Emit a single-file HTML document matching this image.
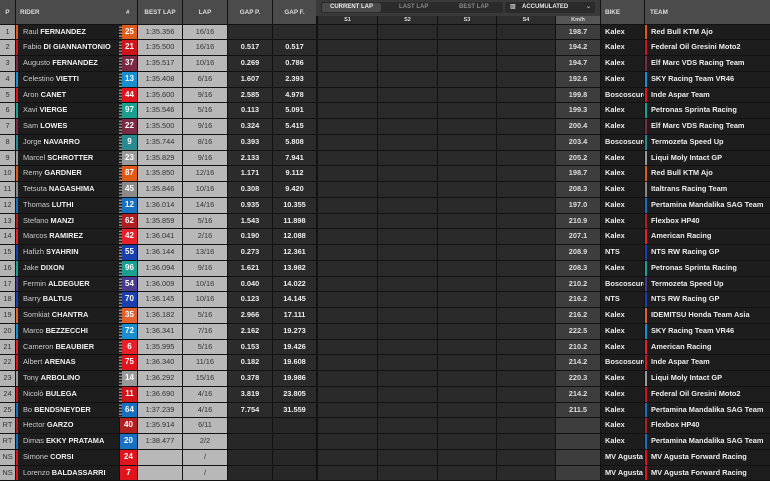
<!DOCTYPE html>
<html><head><meta charset="utf-8"><style>
*{margin:0;padding:0;box-sizing:border-box}
body{width:770px;height:480px;background:#121212;overflow:hidden;font-family:"Liberation Sans",sans-serif;font-size:7.4px;color:#eee;position:relative}
.h{position:absolute;top:0;height:24px;background:#4b4b4b;color:#ddd;font-size:6.3px;font-weight:bold;line-height:25px;text-align:center}
#rows{position:absolute;top:24px;left:0;width:770px}
.r{position:relative;height:15.75px}
.r i{position:absolute;top:0.5px;height:14.75px;line-height:14.75px;font-style:normal;white-space:nowrap;overflow:hidden}
.p{left:0;width:15px;background:#b3b3b3;color:#333;text-align:center}
.rd{left:16px;width:103px;background:#1d1d1d;color:#ccc;padding-left:5px;border-left:2px solid var(--c)}
.rd b{color:#f2f2f2}
.ck{left:119px;width:3px;background:repeating-linear-gradient(#1d1d1d 0 1.5px,#888 1.5px 3px)}
.n{left:122px;width:15px;color:#fff;font-weight:bold;text-align:center;font-size:8px}
.bl{left:138px;width:44px;background:#b8b8b8;color:#333;text-align:center}
.lp{left:183px;width:44px;background:#b8b8b8;color:#333;text-align:center}
.gp{left:228px;width:44px;background:#2b2b2b;color:#eee;font-weight:bold;text-align:center}
.gf{left:273px;width:43px;background:#2b2b2b;color:#eee;font-weight:bold;text-align:center}
.s1{left:318px;width:59px;background:#2a2a2a}
.s2{left:378px;width:59px;background:#2a2a2a}
.s3{left:438px;width:58px;background:#2a2a2a}
.s4{left:497px;width:58px;background:#2a2a2a}
.km{left:556px;width:44px;background:#3d3d3d;color:#ddd;text-align:center;font-weight:bold}
.bk{left:601px;width:43px;background:#1d1d1d;color:#eee;font-weight:bold;padding-left:4px}
.tm{left:645px;width:125px;background:#1d1d1d;color:#eee;font-weight:bold;padding-left:4px;border-left:2px solid var(--c)}
.x .gp,.x .gf{background:#272727}
</style></head><body>
<div class="h" style="left:0;width:15px">P</div>
<div class="h" style="left:16px;width:121px;text-align:left;padding-left:4px">RIDER<span style="position:absolute;left:110px">#</span></div>
<div class="h" style="left:138px;width:44px">BEST LAP</div>
<div class="h" style="left:183px;width:44px">LAP</div>
<div class="h" style="left:228px;width:44px">GAP P.</div>
<div class="h" style="left:273px;width:43px">GAP F.</div>
<div class="h" style="left:316px;width:284px;height:16px;background:#3a3a3a"></div>
<div style="position:absolute;left:321px;top:2px;width:182px;height:11px;background:#2b2b2b;border-radius:2px;font-size:6px;font-weight:bold;line-height:11px;color:#888">
<span style="position:absolute;left:1px;top:1px;width:59px;height:9px;background:#4a4a4a;color:#e8e8e8;text-align:center;line-height:9px;border-radius:2px">CURRENT LAP</span>
<span style="position:absolute;left:78px">LAST LAP</span><span style="position:absolute;left:138px">BEST LAP</span></div>
<div style="position:absolute;left:505px;top:2px;width:90px;height:11px;background:#2b2b2b;border-radius:2px;font-size:6px;font-weight:bold;line-height:11px;color:#e8e8e8"><span style="position:absolute;left:5px;color:#bbb">▥</span><span style="position:absolute;left:17px">ACCUMULATED</span><span style="position:absolute;left:81px;color:#bbb">⌄</span></div>
<div class="h" style="top:16px;left:318px;width:59px;height:8px;line-height:9px;background:#2d2d2d;font-size:5.5px">S1</div>
<div class="h" style="top:16px;left:378px;width:59px;height:8px;line-height:9px;background:#2d2d2d;font-size:5.5px">S2</div>
<div class="h" style="top:16px;left:438px;width:58px;height:8px;line-height:9px;background:#2d2d2d;font-size:5.5px">S3</div>
<div class="h" style="top:16px;left:497px;width:58px;height:8px;line-height:9px;background:#2d2d2d;font-size:5.5px">S4</div>
<div class="h" style="top:16px;left:556px;width:44px;height:8px;line-height:9px;background:#555;font-size:5.5px">Km/h</div>
<div class="h" style="left:601px;width:43px;text-align:left;padding-left:4px">BIKE</div>
<div class="h" style="left:645px;width:125px;text-align:left;padding-left:5px">TEAM</div>
<div id="rows">
<div class="r"><i class="p">1</i><i class="rd" style="--c:#e05a1a">Raul <b>FERNANDEZ</b></i><i class="ck"></i><i class="n" style="background:#e05a1a">25</i><i class="bl">1:35.356</i><i class="lp">16/16</i><i class="gp"></i><i class="gf"></i><i class="s1"></i><i class="s2"></i><i class="s3"></i><i class="s4"></i><i class="km">198.7</i><i class="bk">Kalex</i><i class="tm" style="--c:#e05a1a">Red Bull KTM Ajo</i></div>
<div class="r"><i class="p">2</i><i class="rd" style="--c:#d0141c">Fabio <b>DI GIANNANTONIO</b></i><i class="ck"></i><i class="n" style="background:#d0141c">21</i><i class="bl">1:35.500</i><i class="lp">16/16</i><i class="gp">0.517</i><i class="gf">0.517</i><i class="s1"></i><i class="s2"></i><i class="s3"></i><i class="s4"></i><i class="km">194.2</i><i class="bk">Kalex</i><i class="tm" style="--c:#d0141c">Federal Oil Gresini Moto2</i></div>
<div class="r"><i class="p">3</i><i class="rd" style="--c:#7a2a45">Augusto <b>FERNANDEZ</b></i><i class="ck"></i><i class="n" style="background:#7a2a45">37</i><i class="bl">1:35.517</i><i class="lp">10/16</i><i class="gp">0.269</i><i class="gf">0.786</i><i class="s1"></i><i class="s2"></i><i class="s3"></i><i class="s4"></i><i class="km">194.7</i><i class="bk">Kalex</i><i class="tm" style="--c:#7a2a45">Elf Marc VDS Racing Team</i></div>
<div class="r"><i class="p">4</i><i class="rd" style="--c:#1a8fd0">Celestino <b>VIETTI</b></i><i class="ck"></i><i class="n" style="background:#1a8fd0">13</i><i class="bl">1:35.408</i><i class="lp">6/16</i><i class="gp">1.607</i><i class="gf">2.393</i><i class="s1"></i><i class="s2"></i><i class="s3"></i><i class="s4"></i><i class="km">192.6</i><i class="bk">Kalex</i><i class="tm" style="--c:#1a8fd0">SKY Racing Team VR46</i></div>
<div class="r"><i class="p">5</i><i class="rd" style="--c:#e0141c">Aron <b>CANET</b></i><i class="ck"></i><i class="n" style="background:#e0141c">44</i><i class="bl">1:35.600</i><i class="lp">9/16</i><i class="gp">2.585</i><i class="gf">4.978</i><i class="s1"></i><i class="s2"></i><i class="s3"></i><i class="s4"></i><i class="km">199.8</i><i class="bk">Boscoscuro</i><i class="tm" style="--c:#e0141c">Inde Aspar Team</i></div>
<div class="r"><i class="p">6</i><i class="rd" style="--c:#1aa090">Xavi <b>VIERGE</b></i><i class="ck"></i><i class="n" style="background:#1aa090">97</i><i class="bl">1:35.546</i><i class="lp">5/16</i><i class="gp">0.113</i><i class="gf">5.091</i><i class="s1"></i><i class="s2"></i><i class="s3"></i><i class="s4"></i><i class="km">199.3</i><i class="bk">Kalex</i><i class="tm" style="--c:#1aa090">Petronas Sprinta Racing</i></div>
<div class="r"><i class="p">7</i><i class="rd" style="--c:#7a2a45">Sam <b>LOWES</b></i><i class="ck"></i><i class="n" style="background:#7a2a45">22</i><i class="bl">1:35.500</i><i class="lp">9/16</i><i class="gp">0.324</i><i class="gf">5.415</i><i class="s1"></i><i class="s2"></i><i class="s3"></i><i class="s4"></i><i class="km">200.4</i><i class="bk">Kalex</i><i class="tm" style="--c:#7a2a45">Elf Marc VDS Racing Team</i></div>
<div class="r"><i class="p">8</i><i class="rd" style="--c:#2a8a8f">Jorge <b>NAVARRO</b></i><i class="ck"></i><i class="n" style="background:#2a8a8f">9</i><i class="bl">1:35.744</i><i class="lp">8/16</i><i class="gp">0.393</i><i class="gf">5.808</i><i class="s1"></i><i class="s2"></i><i class="s3"></i><i class="s4"></i><i class="km">203.4</i><i class="bk">Boscoscuro</i><i class="tm" style="--c:#2a8a8f">Termozeta Speed Up</i></div>
<div class="r"><i class="p">9</i><i class="rd" style="--c:#999">Marcel <b>SCHROTTER</b></i><i class="ck"></i><i class="n" style="background:#9a9a9a">23</i><i class="bl">1:35.829</i><i class="lp">9/16</i><i class="gp">2.133</i><i class="gf">7.941</i><i class="s1"></i><i class="s2"></i><i class="s3"></i><i class="s4"></i><i class="km">205.2</i><i class="bk">Kalex</i><i class="tm" style="--c:#999">Liqui Moly Intact GP</i></div>
<div class="r"><i class="p">10</i><i class="rd" style="--c:#e05a1a">Remy <b>GARDNER</b></i><i class="ck"></i><i class="n" style="background:#e05a1a">87</i><i class="bl">1:35.850</i><i class="lp">12/16</i><i class="gp">1.171</i><i class="gf">9.112</i><i class="s1"></i><i class="s2"></i><i class="s3"></i><i class="s4"></i><i class="km">198.7</i><i class="bk">Kalex</i><i class="tm" style="--c:#e05a1a">Red Bull KTM Ajo</i></div>
<div class="r"><i class="p">11</i><i class="rd" style="--c:#888">Tetsuta <b>NAGASHIMA</b></i><i class="ck"></i><i class="n" style="background:#8a8a8a">45</i><i class="bl">1:35.846</i><i class="lp">10/16</i><i class="gp">0.308</i><i class="gf">9.420</i><i class="s1"></i><i class="s2"></i><i class="s3"></i><i class="s4"></i><i class="km">208.3</i><i class="bk">Kalex</i><i class="tm" style="--c:#888">Italtrans Racing Team</i></div>
<div class="r"><i class="p">12</i><i class="rd" style="--c:#1a70c0">Thomas <b>LUTHI</b></i><i class="ck"></i><i class="n" style="background:#1a70c0">12</i><i class="bl">1:36.014</i><i class="lp">14/16</i><i class="gp">0.935</i><i class="gf">10.355</i><i class="s1"></i><i class="s2"></i><i class="s3"></i><i class="s4"></i><i class="km">197.0</i><i class="bk">Kalex</i><i class="tm" style="--c:#1a70c0">Pertamina Mandalika SAG Team</i></div>
<div class="r"><i class="p">13</i><i class="rd" style="--c:#b02020">Stefano <b>MANZI</b></i><i class="ck"></i><i class="n" style="background:#b02020">62</i><i class="bl">1:35.859</i><i class="lp">5/16</i><i class="gp">1.543</i><i class="gf">11.898</i><i class="s1"></i><i class="s2"></i><i class="s3"></i><i class="s4"></i><i class="km">210.9</i><i class="bk">Kalex</i><i class="tm" style="--c:#b02020">Flexbox HP40</i></div>
<div class="r"><i class="p">14</i><i class="rd" style="--c:#e8202a">Marcos <b>RAMIREZ</b></i><i class="ck"></i><i class="n" style="background:#e8202a">42</i><i class="bl">1:36.041</i><i class="lp">2/16</i><i class="gp">0.190</i><i class="gf">12.088</i><i class="s1"></i><i class="s2"></i><i class="s3"></i><i class="s4"></i><i class="km">207.1</i><i class="bk">Kalex</i><i class="tm" style="--c:#e8202a">American Racing</i></div>
<div class="r"><i class="p">15</i><i class="rd" style="--c:#1a40b0">Hafizh <b>SYAHRIN</b></i><i class="ck"></i><i class="n" style="background:#1a40b0">55</i><i class="bl">1:36.144</i><i class="lp">13/16</i><i class="gp">0.273</i><i class="gf">12.361</i><i class="s1"></i><i class="s2"></i><i class="s3"></i><i class="s4"></i><i class="km">208.9</i><i class="bk">NTS</i><i class="tm" style="--c:#1a40b0">NTS RW Racing GP</i></div>
<div class="r"><i class="p">16</i><i class="rd" style="--c:#1aa090">Jake <b>DIXON</b></i><i class="ck"></i><i class="n" style="background:#1aa090">96</i><i class="bl">1:36.094</i><i class="lp">9/16</i><i class="gp">1.621</i><i class="gf">13.982</i><i class="s1"></i><i class="s2"></i><i class="s3"></i><i class="s4"></i><i class="km">208.3</i><i class="bk">Kalex</i><i class="tm" style="--c:#1aa090">Petronas Sprinta Racing</i></div>
<div class="r"><i class="p">17</i><i class="rd" style="--c:#4a3a90">Fermin <b>ALDEGUER</b></i><i class="ck"></i><i class="n" style="background:#4a3a90">54</i><i class="bl">1:36.009</i><i class="lp">10/16</i><i class="gp">0.040</i><i class="gf">14.022</i><i class="s1"></i><i class="s2"></i><i class="s3"></i><i class="s4"></i><i class="km">210.2</i><i class="bk">Boscoscuro</i><i class="tm" style="--c:#4a3a90">Termozeta Speed Up</i></div>
<div class="r"><i class="p">18</i><i class="rd" style="--c:#1a40b0">Barry <b>BALTUS</b></i><i class="ck"></i><i class="n" style="background:#1a40b0">70</i><i class="bl">1:36.145</i><i class="lp">10/16</i><i class="gp">0.123</i><i class="gf">14.145</i><i class="s1"></i><i class="s2"></i><i class="s3"></i><i class="s4"></i><i class="km">216.2</i><i class="bk">NTS</i><i class="tm" style="--c:#1a40b0">NTS RW Racing GP</i></div>
<div class="r"><i class="p">19</i><i class="rd" style="--c:#e06030">Somkiat <b>CHANTRA</b></i><i class="ck"></i><i class="n" style="background:#e06030">35</i><i class="bl">1:36.182</i><i class="lp">5/16</i><i class="gp">2.966</i><i class="gf">17.111</i><i class="s1"></i><i class="s2"></i><i class="s3"></i><i class="s4"></i><i class="km">216.2</i><i class="bk">Kalex</i><i class="tm" style="--c:#e06030">IDEMITSU Honda Team Asia</i></div>
<div class="r"><i class="p">20</i><i class="rd" style="--c:#1a8fd0">Marco <b>BEZZECCHI</b></i><i class="ck"></i><i class="n" style="background:#1a8fd0">72</i><i class="bl">1:36.341</i><i class="lp">7/16</i><i class="gp">2.162</i><i class="gf">19.273</i><i class="s1"></i><i class="s2"></i><i class="s3"></i><i class="s4"></i><i class="km">222.5</i><i class="bk">Kalex</i><i class="tm" style="--c:#1a8fd0">SKY Racing Team VR46</i></div>
<div class="r"><i class="p">21</i><i class="rd" style="--c:#e8202a">Cameron <b>BEAUBIER</b></i><i class="ck"></i><i class="n" style="background:#e8202a">6</i><i class="bl">1:35.995</i><i class="lp">5/16</i><i class="gp">0.153</i><i class="gf">19.426</i><i class="s1"></i><i class="s2"></i><i class="s3"></i><i class="s4"></i><i class="km">210.2</i><i class="bk">Kalex</i><i class="tm" style="--c:#e8202a">American Racing</i></div>
<div class="r"><i class="p">22</i><i class="rd" style="--c:#e0141c">Albert <b>ARENAS</b></i><i class="ck"></i><i class="n" style="background:#e0141c">75</i><i class="bl">1:36.340</i><i class="lp">11/16</i><i class="gp">0.182</i><i class="gf">19.608</i><i class="s1"></i><i class="s2"></i><i class="s3"></i><i class="s4"></i><i class="km">214.2</i><i class="bk">Boscoscuro</i><i class="tm" style="--c:#e0141c">Inde Aspar Team</i></div>
<div class="r"><i class="p">23</i><i class="rd" style="--c:#999">Tony <b>ARBOLINO</b></i><i class="ck"></i><i class="n" style="background:#9a9a9a">14</i><i class="bl">1:36.292</i><i class="lp">15/16</i><i class="gp">0.378</i><i class="gf">19.986</i><i class="s1"></i><i class="s2"></i><i class="s3"></i><i class="s4"></i><i class="km">220.3</i><i class="bk">Kalex</i><i class="tm" style="--c:#999">Liqui Moly Intact GP</i></div>
<div class="r"><i class="p">24</i><i class="rd" style="--c:#d0141c">Nicolò <b>BULEGA</b></i><i class="ck"></i><i class="n" style="background:#d0141c">11</i><i class="bl">1:36.690</i><i class="lp">4/16</i><i class="gp">3.819</i><i class="gf">23.805</i><i class="s1"></i><i class="s2"></i><i class="s3"></i><i class="s4"></i><i class="km">214.2</i><i class="bk">Kalex</i><i class="tm" style="--c:#d0141c">Federal Oil Gresini Moto2</i></div>
<div class="r"><i class="p">25</i><i class="rd" style="--c:#1a70c0">Bo <b>BENDSNEYDER</b></i><i class="ck"></i><i class="n" style="background:#1a70c0">64</i><i class="bl">1:37.239</i><i class="lp">4/16</i><i class="gp">7.754</i><i class="gf">31.559</i><i class="s1"></i><i class="s2"></i><i class="s3"></i><i class="s4"></i><i class="km">211.5</i><i class="bk">Kalex</i><i class="tm" style="--c:#1a70c0">Pertamina Mandalika SAG Team</i></div>
<div class="r x"><i class="p">RT</i><i class="rd" style="--c:#b02020">Hector <b>GARZO</b></i><i class="n" style="left:120px;width:17px;background:#b02020">40</i><i class="bl">1:35.914</i><i class="lp">6/11</i><i class="gp"></i><i class="gf"></i><i class="s1"></i><i class="s2"></i><i class="s3"></i><i class="s4"></i><i class="km"></i><i class="bk">Kalex</i><i class="tm" style="--c:#b02020">Flexbox HP40</i></div>
<div class="r x"><i class="p">RT</i><i class="rd" style="--c:#1a70c0">Dimas <b>EKKY PRATAMA</b></i><i class="n" style="left:120px;width:17px;background:#1a70c0">20</i><i class="bl">1:38.477</i><i class="lp">2/2</i><i class="gp"></i><i class="gf"></i><i class="s1"></i><i class="s2"></i><i class="s3"></i><i class="s4"></i><i class="km"></i><i class="bk">Kalex</i><i class="tm" style="--c:#1a70c0">Pertamina Mandalika SAG Team</i></div>
<div class="r x"><i class="p">NS</i><i class="rd" style="--c:#e0141c">Simone <b>CORSI</b></i><i class="n" style="left:120px;width:17px;background:#e0141c">24</i><i class="bl"></i><i class="lp">/</i><i class="gp"></i><i class="gf"></i><i class="s1"></i><i class="s2"></i><i class="s3"></i><i class="s4"></i><i class="km"></i><i class="bk">MV Agusta</i><i class="tm" style="--c:#e0141c">MV Agusta Forward Racing</i></div>
<div class="r x"><i class="p">NS</i><i class="rd" style="--c:#e0141c">Lorenzo <b>BALDASSARRI</b></i><i class="n" style="left:120px;width:17px;background:#e0141c">7</i><i class="bl"></i><i class="lp">/</i><i class="gp"></i><i class="gf"></i><i class="s1"></i><i class="s2"></i><i class="s3"></i><i class="s4"></i><i class="km"></i><i class="bk">MV Agusta</i><i class="tm" style="--c:#e0141c">MV Agusta Forward Racing</i></div>
</div>
</body></html>
